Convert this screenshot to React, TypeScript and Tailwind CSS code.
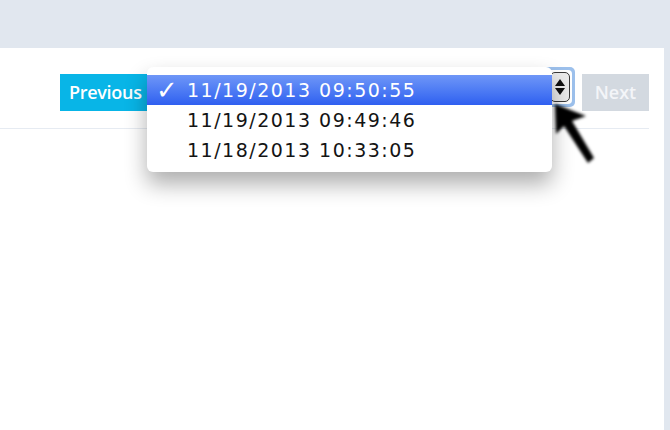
import React from "react"

const options = ["11/19/2013 09:50:55", "11/19/2013 09:49:46", "11/18/2013 10:33:05"]

function Cursor() {
  return (
    <svg className="absolute left-[552px] top-[101px]" width="50" height="68" viewBox="0 0 50 68">
      <defs>
        <filter id="soft" x="-20%" y="-20%" width="140%" height="140%">
          <feGaussianBlur stdDeviation="1.4" />
        </filter>
      </defs>
      <polygon points="3,3 4,33 12,25 36,62 42,57 20,20 34,15" fill="#000" filter="url(#soft)" />
    </svg>
  )
}

function Dropdown() {
  return (
    <div className="absolute left-[147px] top-[67px] w-[405px] h-[105px] rounded-[6px] bg-white pt-[8px] shadow-[0_12px_22px_rgba(0,0,0,0.32)] font-['DejaVu_Sans',sans-serif] text-[19px] tracking-[1.5px]">
      {options.map((o, i) => (
        <div
          key={o}
          className={
            i === 0
              ? "flex h-[30px] items-center bg-gradient-to-b from-[#6f96f7] to-[#2f5ff0] text-white"
              : "flex h-[30px] items-center text-[#141414]"
          }
        >
          <span className="w-[40px] pl-[9px] text-[26px] font-bold leading-none">{i === 0 ? "✓" : ""}</span>
          <span>{o}</span>
        </div>
      ))}
    </div>
  )
}

export default function App() {
  return (
    <div className="relative flex h-[430px] w-[670px] flex-col overflow-hidden bg-[#e1e7ef] font-['Open_Sans',sans-serif]">
      <div className="h-[48px]" />
      <div className="mr-[6px] flex-1 bg-white">
        <div className="mr-[15px] flex items-start justify-end border-b border-[#e6ebf2] pt-[19px] pb-[17px]">
          <button className="mt-[7px] h-[37px] w-[90px] bg-[#08b5e7] pl-[9px] text-left text-[18px] font-semibold tracking-[-0.3px] text-white">
            Previous
          </button>
          <div className="h-[40px] w-[425px] rounded-[5px] bg-[#9cc0ec] p-[3px]">
            <div className="flex h-full justify-end rounded-[4px] bg-white p-[2px]">
              <div className="flex h-full w-[20px] items-center justify-center rounded-[5px] border border-[#3a3a3a] bg-[#ececec]">
                <svg width="12" height="18" viewBox="0 0 12 18">
                  <path d="M6 1 L11 8 L1 8 Z" fill="#111" />
                  <path d="M6 17 L11 10 L1 10 Z" fill="#111" />
                </svg>
              </div>
            </div>
          </div>
          <button className="ml-[7px] mt-[7px] h-[37px] w-[67px] bg-[#d3d9e0] text-[18px] font-semibold text-[#f3f5f8]">
            Next
          </button>
        </div>
      </div>
      <Dropdown />
      <Cursor />
    </div>
  )
}
